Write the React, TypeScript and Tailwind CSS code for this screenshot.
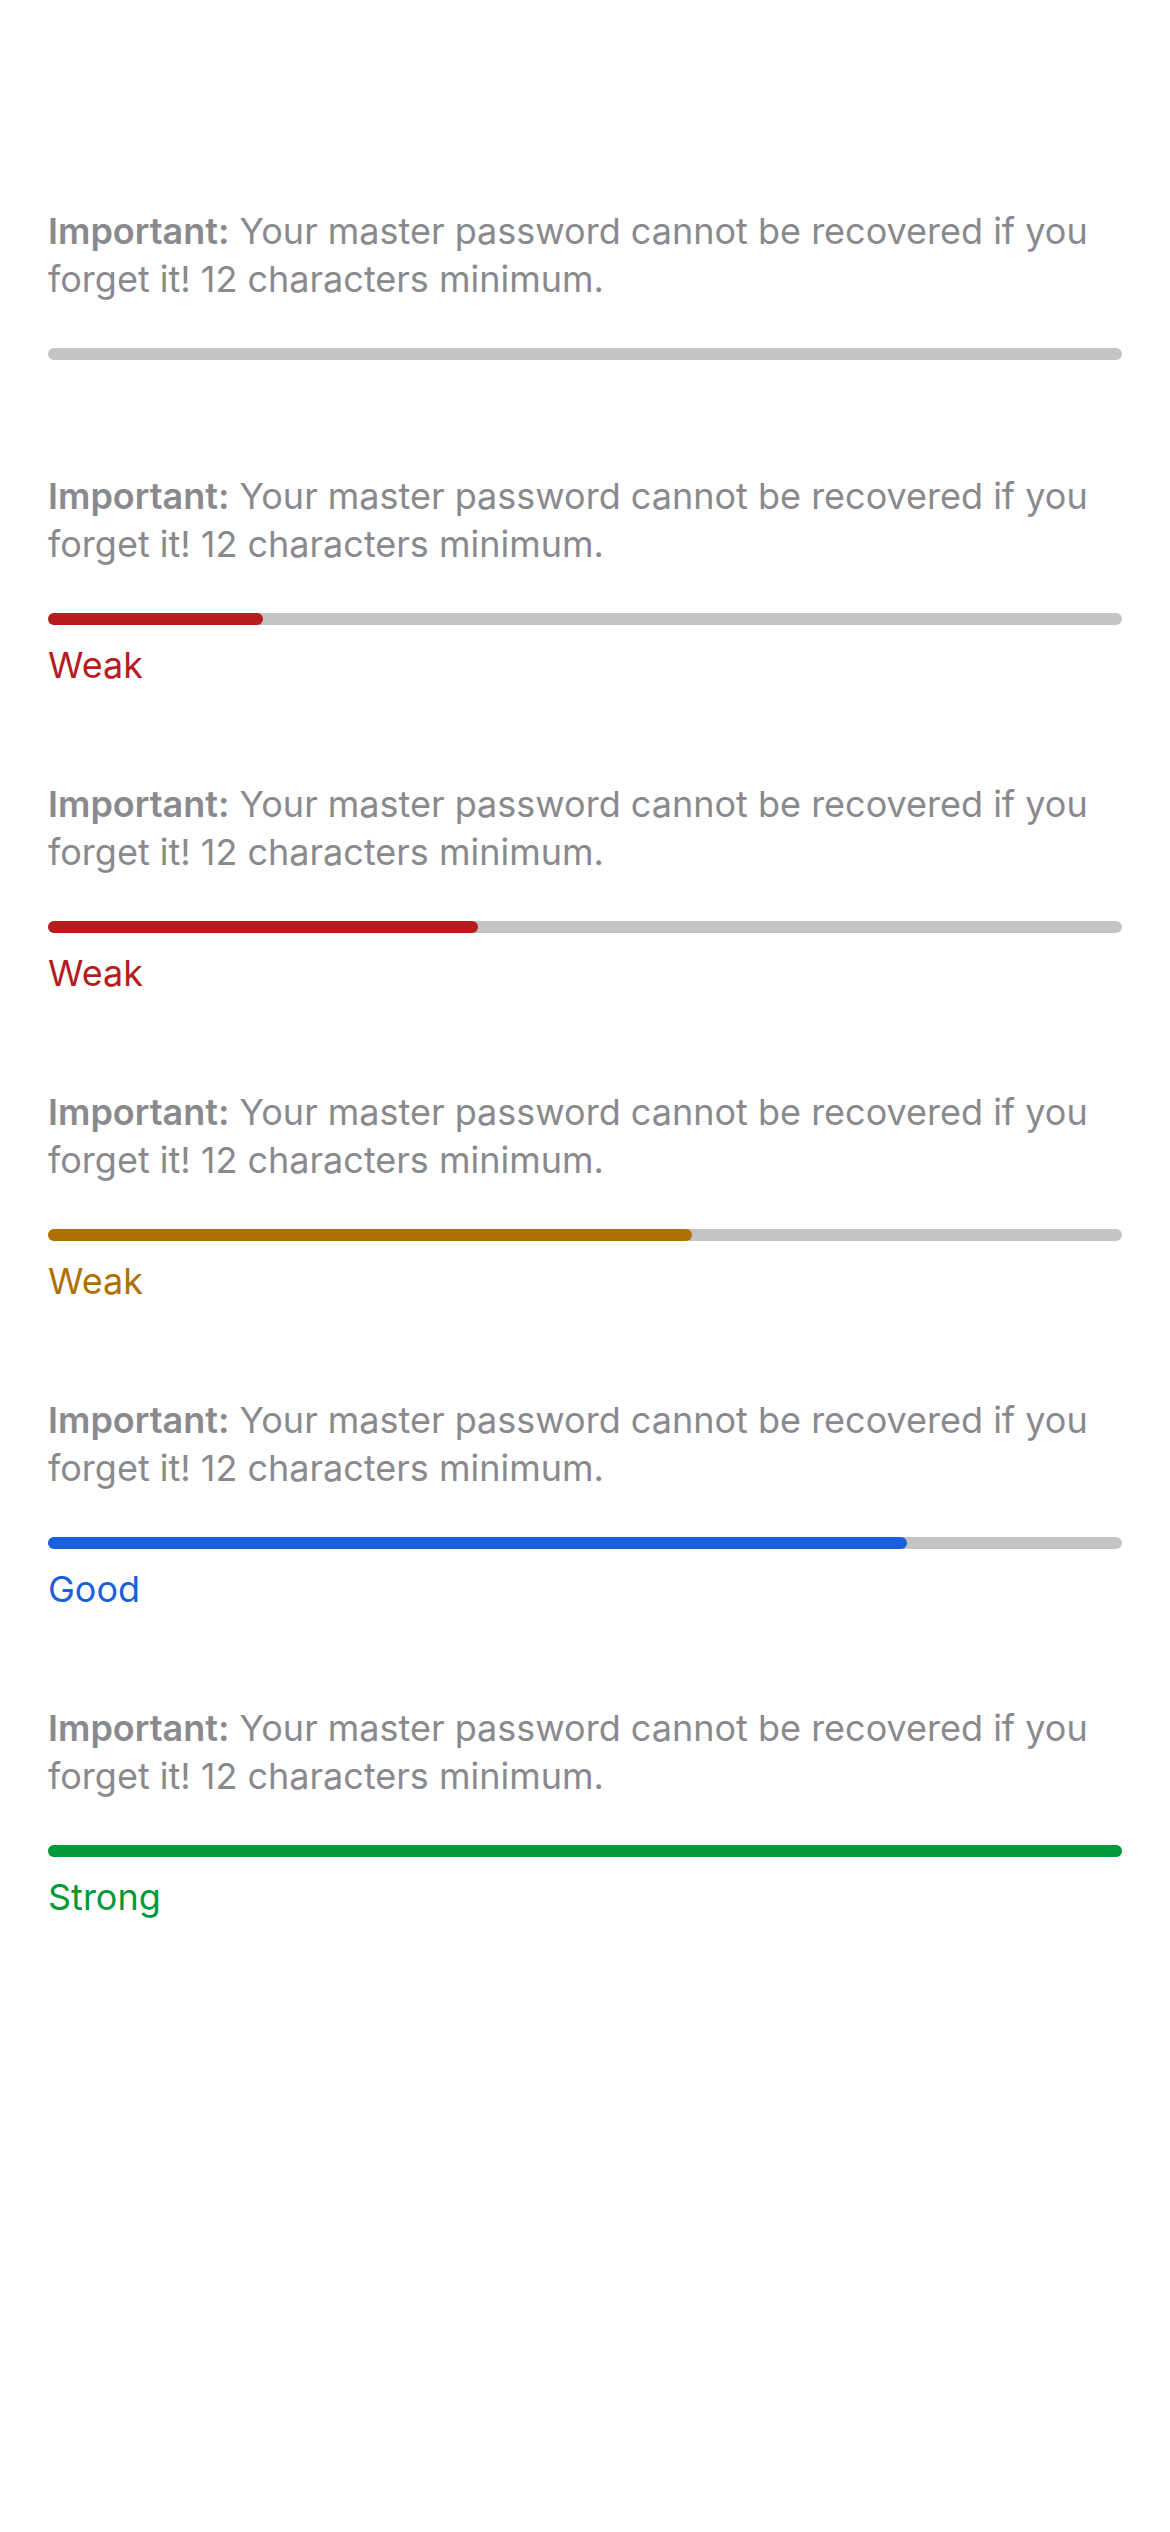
const levels = [
  { pct: 0, label: null, bar: "", text: "" },
  { pct: 20, label: "Weak", bar: "bg-[#b71c1c]", text: "text-[#b71c1c]" },
  { pct: 40, label: "Weak", bar: "bg-[#b71c1c]", text: "text-[#b71c1c]" },
  { pct: 60, label: "Weak", bar: "bg-[#b07000]", text: "text-[#b07000]" },
  { pct: 80, label: "Good", bar: "bg-[#1a5fdb]", text: "text-[#1a5fdb]" },
  { pct: 100, label: "Strong", bar: "bg-[#00993a]", text: "text-[#00993a]" },
];

function StrengthBlock({ level }: { level: (typeof levels)[number] }) {
  return (
    <div className={level.label ? "pb-[92px]" : "pb-[112px]"}>
      <p className="text-[36px] leading-[48px] text-[#8a8a8e]">
        <span className="font-semibold">Important:</span> Your master password cannot be recovered if you
        forget it! 12 characters minimum.
      </p>
      <div className="mt-[45px] h-[12px] w-full rounded-full bg-[#c4c4c6]">
        {level.pct > 0 && (
          <div className={`h-full rounded-full ${level.bar}`} style={{ width: `${level.pct}%` }} />
        )}
      </div>
      {level.label && (
        <p className={`mt-[17px] text-[36px] leading-[46px] ${level.text}`}>{level.label}</p>
      )}
    </div>
  );
}

export default function App() {
  return (
    <div className="min-h-[2532px] bg-white px-[48px] pt-[207px] font-['Inter',sans-serif]">
      {levels.map((level, i) => (
        <StrengthBlock key={i} level={level} />
      ))}
    </div>
  );
}
